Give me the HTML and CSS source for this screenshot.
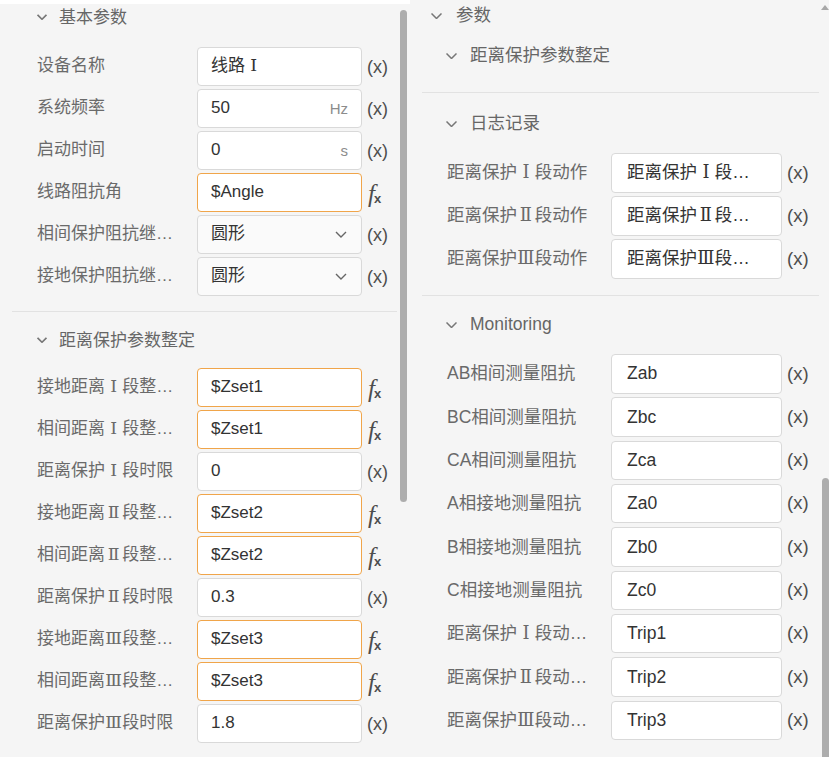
FILE: index.html
```html
<!DOCTYPE html>
<html lang="zh-CN">
<head>
<meta charset="utf-8">
<title>参数面板</title>
<link rel="stylesheet" href="styles.css">
</head>
<body>
<div class="app">
  <div class="panel panel-left">
    <div class="strip"></div>
    <section class="sec sec-first">
      <div class="sec-head"><svg class="chev" viewBox="0 0 9 5"><path d="M0.5 0.5L4.5 4.5L8.5 0.5"/></svg><span>基本参数</span></div>
      <div class="rows">
        <div class="row"><span class="label">设备名称</span><div class="box"><span class="val">线路<span class="rn">Ⅰ</span></span></div><span class="var">(x)</span></div>
        <div class="row"><span class="label">系统频率</span><div class="box"><span class="val">50</span><span class="unit">Hz</span></div><span class="var">(x)</span></div>
        <div class="row"><span class="label">启动时间</span><div class="box"><span class="val">0</span><span class="unit">s</span></div><span class="var">(x)</span></div>
        <div class="row"><span class="label">线路阻抗角</span><div class="box expr"><span class="val">$Angle</span></div><span class="var fx"><i>f</i><sub>x</sub></span></div>
        <div class="row"><span class="label">相间保护阻抗继…</span><div class="box select"><span class="val">圆形</span><svg class="caret" viewBox="0 0 12 7"><path d="M1 1L6 6L11 1"/></svg></div><span class="var">(x)</span></div>
        <div class="row"><span class="label">接地保护阻抗继…</span><div class="box select"><span class="val">圆形</span><svg class="caret" viewBox="0 0 12 7"><path d="M1 1L6 6L11 1"/></svg></div><span class="var">(x)</span></div>
      </div>
    </section>
    <section class="sec sec-second">
      <div class="sec-head"><svg class="chev" viewBox="0 0 9 5"><path d="M0.5 0.5L4.5 4.5L8.5 0.5"/></svg><span>距离保护参数整定</span></div>
      <div class="rows">
        <div class="row"><span class="label">接地距离<span class="rn">Ⅰ</span>段整…</span><div class="box expr"><span class="val">$Zset1</span></div><span class="var fx"><i>f</i><sub>x</sub></span></div>
        <div class="row"><span class="label">相间距离<span class="rn">Ⅰ</span>段整…</span><div class="box expr"><span class="val">$Zset1</span></div><span class="var fx"><i>f</i><sub>x</sub></span></div>
        <div class="row"><span class="label">距离保护<span class="rn">Ⅰ</span>段时限</span><div class="box"><span class="val">0</span></div><span class="var">(x)</span></div>
        <div class="row"><span class="label">接地距离<span class="rn">Ⅱ</span>段整…</span><div class="box expr"><span class="val">$Zset2</span></div><span class="var fx"><i>f</i><sub>x</sub></span></div>
        <div class="row"><span class="label">相间距离<span class="rn">Ⅱ</span>段整…</span><div class="box expr"><span class="val">$Zset2</span></div><span class="var fx"><i>f</i><sub>x</sub></span></div>
        <div class="row"><span class="label">距离保护<span class="rn">Ⅱ</span>段时限</span><div class="box"><span class="val">0.3</span></div><span class="var">(x)</span></div>
        <div class="row"><span class="label">接地距离<span class="rn">Ⅲ</span>段整…</span><div class="box expr"><span class="val">$Zset3</span></div><span class="var fx"><i>f</i><sub>x</sub></span></div>
        <div class="row"><span class="label">相间距离<span class="rn">Ⅲ</span>段整…</span><div class="box expr"><span class="val">$Zset3</span></div><span class="var fx"><i>f</i><sub>x</sub></span></div>
        <div class="row"><span class="label">距离保护<span class="rn">Ⅲ</span>段时限</span><div class="box"><span class="val">1.8</span></div><span class="var">(x)</span></div>
      </div>
    </section>
    <div class="thumb thumb-left"></div>
  </div>

  <div class="panel panel-right">
    <section class="sec sec-top">
      <div class="sec-head head-root"><svg class="chev" viewBox="0 0 11 6"><path d="M0.5 0.5L5.5 5.5L10.5 0.5"/></svg><span>参数</span></div>
      <div class="sec-head head-sub"><svg class="chev" viewBox="0 0 11 6"><path d="M0.5 0.5L5.5 5.5L10.5 0.5"/></svg><span>距离保护参数整定</span></div>
    </section>
    <section class="sec sec-log">
      <div class="sec-head"><svg class="chev" viewBox="0 0 11 6"><path d="M0.5 0.5L5.5 5.5L10.5 0.5"/></svg><span>日志记录</span></div>
      <div class="rows">
        <div class="row"><span class="label">距离保护<span class="rn">Ⅰ</span>段动作</span><div class="box"><span class="val">距离保护<span class="rn">Ⅰ</span>段…</span></div><span class="var">(x)</span></div>
        <div class="row"><span class="label">距离保护<span class="rn">Ⅱ</span>段动作</span><div class="box"><span class="val">距离保护<span class="rn">Ⅱ</span>段…</span></div><span class="var">(x)</span></div>
        <div class="row"><span class="label">距离保护<span class="rn">Ⅲ</span>段动作</span><div class="box"><span class="val">距离保护<span class="rn">Ⅲ</span>段…</span></div><span class="var">(x)</span></div>
      </div>
    </section>
    <section class="sec sec-mon">
      <div class="sec-head"><svg class="chev" viewBox="0 0 11 6"><path d="M0.5 0.5L5.5 5.5L10.5 0.5"/></svg><span>Monitoring</span></div>
      <div class="rows">
        <div class="row"><span class="label">AB相间测量阻抗</span><div class="box"><span class="val">Zab</span></div><span class="var">(x)</span></div>
        <div class="row"><span class="label">BC相间测量阻抗</span><div class="box"><span class="val">Zbc</span></div><span class="var">(x)</span></div>
        <div class="row"><span class="label">CA相间测量阻抗</span><div class="box"><span class="val">Zca</span></div><span class="var">(x)</span></div>
        <div class="row"><span class="label">A相接地测量阻抗</span><div class="box"><span class="val">Za0</span></div><span class="var">(x)</span></div>
        <div class="row"><span class="label">B相接地测量阻抗</span><div class="box"><span class="val">Zb0</span></div><span class="var">(x)</span></div>
        <div class="row"><span class="label">C相接地测量阻抗</span><div class="box"><span class="val">Zc0</span></div><span class="var">(x)</span></div>
        <div class="row"><span class="label">距离保护<span class="rn">Ⅰ</span>段动…</span><div class="box"><span class="val">Trip1</span></div><span class="var">(x)</span></div>
        <div class="row"><span class="label">距离保护<span class="rn">Ⅱ</span>段动…</span><div class="box"><span class="val">Trip2</span></div><span class="var">(x)</span></div>
        <div class="row"><span class="label">距离保护<span class="rn">Ⅲ</span>段动…</span><div class="box"><span class="val">Trip3</span></div><span class="var">(x)</span></div>
      </div>
    </section>
    <div class="arrow-up"></div>
    <div class="thumb thumb-right"></div>
  </div>
</div>
</body>
</html>
```

FILE: styles.css
```css
* { box-sizing: border-box; }

html, body {
  margin: 0;
  padding: 0;
  background: #f5f5f5;
}

body {
  font-family: "Liberation Sans", "Noto Sans CJK SC", sans-serif;
  color: #666;
  width: 829px;
  height: 757px;
  overflow: hidden;
}

.app {
  display: flex;
  width: 829px;
  height: 757px;
}

.panel {
  position: relative;
  height: 757px;
  overflow: hidden;
}

.panel-left {
  width: 410px;
  padding: 0 13px 0 12px;
  font-size: 17px;
}

.panel-right {
  width: 419px;
  padding: 0 10px 0 12px;
  font-size: 17.5px;
}

.strip {
  height: 4px;
  margin: 0 -14px 0 -12px;
  background: #ffffff;
}

/* roman numerals: serif glyph centred in a full-width cell */
.rn {
  display: inline-block;
  min-width: 1em;
  text-align: center;
  font-family: "DejaVu Serif", "Liberation Serif", serif;
  font-size: 1.02em;
  line-height: 1;
}

/* section headers */
.sec-head {
  display: flex;
  align-items: center;
  height: 26px;
  line-height: 1;
  color: #666;
}

.chev {
  flex: none;
  fill: none;
  stroke: #777;
  stroke-width: 1.5;
}

.panel-left .sec-head { padding-left: 25px; }
.panel-left .chev { width: 10px; height: 6px; margin-right: 12px; }

.panel-right .sec-head { height: 27px; padding-left: 24px; }
.panel-right .chev { width: 11px; height: 6px; margin-right: 13px; }
.panel-right .head-root { padding-left: 9px; }
.panel-right .head-root .chev { margin-right: 14px; }

/* sections */
.sec { border-bottom: 1px solid #e2e2e2; }

.sec-first { padding-bottom: 15px; }
.sec-first .rows { margin-top: 17px; }

.sec-second { border-bottom: none; padding-top: 15px; }
.sec-second .rows { margin-top: 15px; }

.sec-top { padding-top: 2px; padding-bottom: 23px; }
.sec-top .head-sub { margin-top: 13px; }

.sec-log { padding-top: 17px; padding-bottom: 16.5px; }
.sec-log .rows { margin-top: 16px; }

.sec-mon { border-bottom: none; padding-top: 15px; }
.sec-mon .rows { margin-top: 16px; }

/* rows */
.rows {
  display: flex;
  flex-direction: column;
}

.panel-left .rows { gap: 3px; }
.sec-log .rows { gap: 3.5px; }
.sec-mon .rows { gap: 3.83px; }

.row {
  display: flex;
  align-items: center;
  height: 39px;
}

.panel-right .row { height: 39.5px; }

.label {
  flex: none;
  white-space: nowrap;
  color: #6a6a6a;
  line-height: 1.3;
}

.panel-left .label { width: 160px; margin-left: 25px; }
.panel-right .label { width: 164px; margin-left: 25px; }

.box {
  flex: none;
  display: flex;
  align-items: center;
  height: 100%;
  background: #ffffff;
  border: 1px solid #d9d9d9;
  border-radius: 4px;
  color: #333;
  line-height: 1.3;
  white-space: nowrap;
}

.panel-left .box { width: 165px; padding: 0 13px 0 13px; }
.panel-right .box { width: 171px; padding: 0 14px 0 15px; }

.box.expr { border-color: #f0a54a; }
.box.select { background: #fafafa; }

.val { flex: 1; }

.unit {
  flex: none;
  font-size: 15px;
  color: #8c8c8c;
}

.caret {
  flex: none;
  width: 12px;
  height: 7px;
  fill: none;
  stroke: #666;
  stroke-width: 1.4;
  margin-right: 1px;
}

.var {
  flex: none;
  margin-left: 5px;
  color: #4d4d4d;
  font-size: 18px;
  line-height: 1;
  white-space: nowrap;
}

.panel-right .var { font-size: 18.5px; }

.fx {
  display: flex;
  align-items: flex-end;
  color: #4d4d4d;
  margin-left: 6px;
  padding-top: 2px;
}

.fx i {
  font-family: "Liberation Serif", serif;
  font-style: italic;
  font-size: 25px;
  line-height: 1;
}

.fx sub {
  font-family: "Liberation Sans", sans-serif;
  font-weight: bold;
  font-size: 13px;
  line-height: 1;
  vertical-align: baseline;
  margin-left: -1px;
  margin-bottom: 1px;
}

/* scrollbars (overlay) */
.thumb {
  position: absolute;
  width: 7px;
  background: #adadad;
  border-radius: 4px;
}

.thumb-left { left: 400px; top: 10px; height: 492px; }
.thumb-right { left: 412px; top: 478px; height: 290px; }

.arrow-up {
  position: absolute;
  left: 411px;
  top: 5px;
  width: 0;
  height: 0;
  border-left: 4px solid transparent;
  border-right: 4px solid transparent;
  border-bottom: 5px solid #a8a8a8;
}
```
